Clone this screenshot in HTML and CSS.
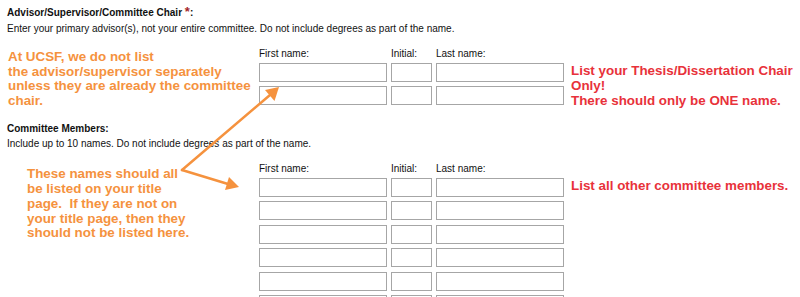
FILE: index.html
```html
<!DOCTYPE html>
<html lang="en">
<head>
    <meta charset="UTF-8">
    <meta name="viewport" content="width=device-width, initial-scale=1.0">
    <title>Committee</title>
    <link rel="stylesheet" href="styles.css">
</head>
<body>
    <div class="page">
        <!-- Chair -->
        <div class="section section-chair">
            <h3 class="field-title">Advisor/Supervisor/Committee Chair <span class="req">*</span>:</h3>
            <p class="field-help">Enter your primary advisor(s), not your entire committee. Do not include degrees as part of the name.</p>

            <div class="field-row">
                <div class="note-orange note-chair">At UCSF, we do not list<br>the advisor/supervisor separately<br>unless they are already the committee<br>chair.</div>
                <div class="names">
                    <span class="lbl">First name:</span>
                    <span class="lbl">Initial:</span>
                    <span class="lbl">Last name:</span>
                    <input type="text"><input type="text"><input type="text">
                    <input type="text"><input type="text"><input type="text">
                </div>
                <div class="note-red">List your Thesis/Dissertation Chair<br>Only!<br>There should only be ONE name.</div>
            </div>
        </div>

        <!-- Members -->
        <div class="section section-members">
            <h3 class="field-title">Committee Members:</h3>
            <p class="field-help">Include up to 10 names. Do not include degrees as part of the name.</p>

            <div class="field-row">
                <div class="note-orange note-members">These names should all<br>be listed on your title<br>page.&nbsp; If they are not on<br>your title page, then they<br>should not be listed here.</div>
                <div class="names">
                    <span class="lbl">First name:</span>
                    <span class="lbl">Initial:</span>
                    <span class="lbl">Last name:</span>
                    <input type="text"><input type="text"><input type="text">
                    <input type="text"><input type="text"><input type="text">
                    <input type="text"><input type="text"><input type="text">
                    <input type="text"><input type="text"><input type="text">
                    <input type="text"><input type="text"><input type="text">
                    <input type="text"><input type="text"><input type="text">
                </div>
                <div class="note-red">List all other committee members.</div>
            </div>
        </div>

        <!-- annotation arrows -->
        <svg class="arrows" width="800" height="297" viewBox="0 0 800 297">
            <g stroke="#f5923e" stroke-width="2.5" stroke-linecap="round" fill="none">
                <line x1="182" y1="170" x2="270" y2="95"/>
                <line x1="182" y1="170" x2="228" y2="184"/>
            </g>
            <g fill="#f5923e">
                <polygon points="279,87 274.5,101 265,90"/>
                <polygon points="239,187 225,190 229,177"/>
            </g>
        </svg>
    </div>
</body>
</html>
```

FILE: styles.css
```css
body {
    margin: 0;
    padding: 0;
    background-color: #fff;
    font-family: "Liberation Sans", Arial, sans-serif;
    color: #111;
}

.page {
    position: relative;
    width: 800px;
    height: 297px;
    overflow: hidden;
    padding-left: 7px;
    box-sizing: border-box;
}

.field-title {
    margin: 0;
    font-size: 10px;
    line-height: 12px;
    font-weight: bold;
}

.field-title .req {
    color: #a51f2a;
    font-size: 13px;
}

.field-help {
    margin: 4px 0 0;
    font-size: 10px;
    line-height: 12px;
}

.section-chair {
    padding-top: 6px;
}

.section-members {
    margin-top: 15px;
}

.section-members .field-help {
    margin-top: 3px;
}

.field-row {
    display: flex;
    align-items: flex-start;
    margin-top: 13px;
}

.note-orange {
    color: #f5923e;
    font-size: 13.4px;
    line-height: 14.6px;
    font-weight: bold;
    box-sizing: border-box;
    width: 252px;
}

.note-chair {
    padding-left: 1px;
    margin-top: 2px;
}

.note-members {
    padding-left: 20px;
    margin-top: 4px;
    line-height: 14.75px;
}

.names {
    display: grid;
    grid-template-columns: 128px 41px 128px;
    column-gap: 4px;
    row-gap: 4.5px;
}

.lbl {
    font-size: 10px;
    line-height: 12px;
    margin-bottom: -2px;
}

.names input {
    box-sizing: border-box;
    height: 19px;
    margin: 0;
    padding: 0 3px;
    border: 1px solid #a6a6a6;
    background-color: #fff;
}

.note-red {
    margin-left: 7px;
    margin-top: 15px;
    color: #e8323a;
    font-size: 13.4px;
    line-height: 15px;
    font-weight: bold;
}

.arrows {
    position: absolute;
    left: 0;
    top: 0;
    pointer-events: none;
}
```
